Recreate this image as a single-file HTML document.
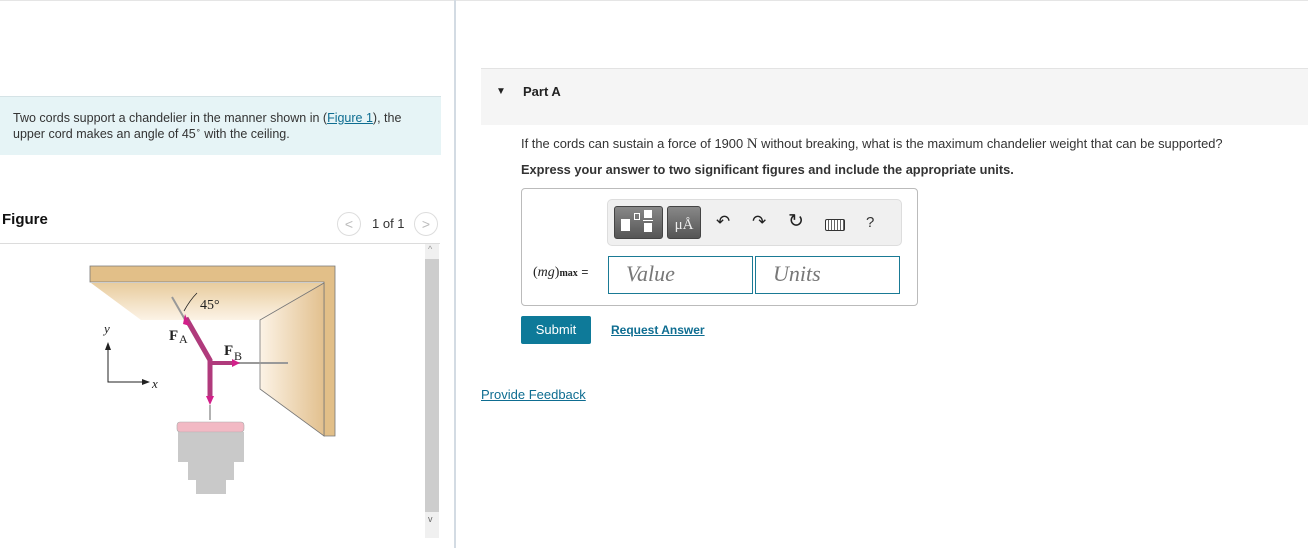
<!DOCTYPE html>
<html><head><meta charset="utf-8"><style>
*{margin:0;padding:0;box-sizing:border-box}
body{width:1308px;height:548px;background:#fff;font-family:"Liberation Sans",Arial,sans-serif;color:#333;position:relative;overflow:hidden;font-size:13px}
.a{position:absolute}
a{color:#0e6d91}
sup{line-height:0}
</style></head><body>
<div class="a" style="left:0;top:0;width:1308px;height:1px;background:#e5e5e5"></div>
<div class="a" style="left:454px;top:0;width:2px;height:548px;background:#d3dbe3"></div>
<div class="a" style="left:0;top:96px;width:441px;height:59px;background:#e6f4f6;border-top:1px solid #d5e3e6"></div>
<div class="a" style="left:13px;top:110px;width:420px;font-size:12.5px;line-height:16px;color:#333">Two cords support a chandelier in the manner shown in (<a href="#" style="text-decoration:underline">Figure 1</a>), the upper cord makes an angle of 45<sup style="font-size:8px">∘</sup> with the ceiling.</div>
<div class="a" style="left:2px;top:211px;font-size:15px;font-weight:bold;color:#111">Figure</div>
<div class="a" style="left:337px;top:212px;width:24px;height:24px;border:1px solid #ddd;border-radius:50%;color:#bbb;text-align:center;line-height:22px;font-size:14px">&lt;</div>
<div class="a" style="left:372px;top:216px;font-size:13px;color:#333">1 of 1</div>
<div class="a" style="left:414px;top:212px;width:24px;height:24px;border:1px solid #ddd;border-radius:50%;color:#bbb;text-align:center;line-height:22px;font-size:14px">&gt;</div>
<div class="a" style="left:0;top:243px;width:440px;height:1px;background:#dcdcdc"></div>
<div class="a" style="left:425px;top:244px;width:14px;height:294px;background:#f0f0f0"></div>
<div class="a" style="left:425px;top:259px;width:14px;height:253px;background:#cdcdcd"></div>
<div class="a" style="left:428px;top:244px;font-size:9px;color:#999">^</div>
<div class="a" style="left:428px;top:514px;font-size:9px;color:#666">v</div>
<svg class="a" style="left:80px;top:260px" width="300" height="250" viewBox="80 260 300 250">
<defs><linearGradient id="c" x1="0" y1="0" x2="0" y2="1"><stop offset="0" stop-color="#e8cc9e"/><stop offset="1" stop-color="#fcf3e6"/></linearGradient>
<linearGradient id="w" x1="0" y1="0" x2="1" y2="0"><stop offset="0" stop-color="#fcf3e6"/><stop offset="1" stop-color="#e2c08e"/></linearGradient></defs>
<polygon points="90,266 335,266 335,436 324,436 324,282 90,282" fill="#e2bf88" stroke="#777" stroke-width="0.8"/>
<polygon points="91,283 324,283 260,320 141,320" fill="url(#c)"/>
<polygon points="260,320 324,283 324,436 260,389" fill="url(#w)" stroke="#777" stroke-width="0.8"/>
<line x1="172" y1="297" x2="210" y2="363" stroke="#999" stroke-width="2"/>
<line x1="210" y1="363" x2="288" y2="363" stroke="#999" stroke-width="2"/>
<path d="M186,318 L210,360 L210,398" stroke="#b03a7c" stroke-width="5" fill="none"/>
<line x1="210" y1="363" x2="234" y2="363" stroke="#b03a7c" stroke-width="4"/>
<polygon points="185,314 190,326 183,324" fill="#d21f8a"/><polygon points="240,363 232,359 232,367" fill="#d21f8a"/><polygon points="210,405 206,396 214,396" fill="#d21f8a"/>
<line x1="210" y1="405" x2="210" y2="420" stroke="#999" stroke-width="1.5"/>
<path d="M184,311 Q190,300 197,293" stroke="#222" fill="none" stroke-width="0.8"/>
<text x="200" y="309" font-family="Liberation Serif" font-size="14" fill="#222">45°</text>
<text x="169" y="340" font-family="Liberation Serif" font-size="15" font-weight="bold" fill="#222">F</text><text x="179" y="343" font-family="Liberation Serif" font-size="12" fill="#222">A</text>
<text x="224" y="355" font-family="Liberation Serif" font-size="15" font-weight="bold" fill="#222">F</text><text x="234" y="360" font-family="Liberation Serif" font-size="12" fill="#222">B</text>
<text x="104" y="333" font-family="Liberation Serif" font-style="italic" font-size="13" fill="#222">y</text>
<text x="152" y="388" font-family="Liberation Serif" font-style="italic" font-size="13" fill="#222">x</text>
<path d="M108,347 L108,382 L146,382" stroke="#222" fill="none"/><polygon points="108,342 105,350 111,350" fill="#222"/><polygon points="150,382 142,379 142,385" fill="#222"/>
<rect x="177" y="422" width="67" height="10" rx="3" fill="#f2b9c4" stroke="#aaa" stroke-width="0.6"/>
<rect x="178" y="432" width="66" height="30" fill="#bbb" opacity="0.8"/>
<rect x="188" y="462" width="46" height="18" fill="#bbb" opacity="0.8"/>
<rect x="196" y="480" width="30" height="14" fill="#bbb" opacity="0.8"/>
</svg>
<div class="a" style="left:481px;top:68px;width:827px;height:57px;background:#f5f5f5;border-top:1px solid #e3e3e3"></div>
<div class="a" style="left:496px;top:86px;font-size:10px;color:#222">▼</div>
<div class="a" style="left:523px;top:84px;font-size:13px;font-weight:bold;color:#222">Part A</div>
<div class="a" style="left:521px;top:136px;font-size:12.9px;color:#333;white-space:nowrap">If the cords can sustain a force of 1900 <span style="font-family:'Liberation Serif';font-size:15px">N</span> without breaking, what is the maximum chandelier weight that can be supported?</div>
<div class="a" style="left:521px;top:162px;font-size:12.8px;font-weight:bold;color:#333;white-space:nowrap">Express your answer to two significant figures and include the appropriate units.</div>
<div class="a" style="left:521px;top:188px;width:397px;height:118px;border:1px solid #bbb;border-radius:4px"></div>
<div class="a" style="left:607px;top:199px;width:295px;height:47px;background:#f0f0f0;border:1px solid #ddd;border-radius:5px"></div>
<div class="a" style="left:614px;top:206px;width:49px;height:33px;background:linear-gradient(#888,#555);border-radius:3px;border:1px solid #444">
<div class="a" style="left:6px;top:12px;width:9px;height:12px;background:#fff"></div><div class="a" style="left:19px;top:6px;width:6px;height:7px;border:1px solid #fff"></div><div class="a" style="left:29px;top:3px;width:8px;height:8px;background:#fff"></div><div class="a" style="left:28px;top:13px;width:10px;height:1px;background:#fff"></div><div class="a" style="left:29px;top:16px;width:8px;height:9px;background:#fff"></div></div>
<div class="a" style="left:667px;top:206px;width:34px;height:33px;background:linear-gradient(#888,#555);border-radius:3px;border:1px solid #444;color:#eee;font-family:'Liberation Serif';font-size:15px;text-align:center;line-height:36px">μÅ</div>
<div class="a" style="left:716px;top:212px;font-size:17px;color:#222">↶</div>
<div class="a" style="left:752px;top:212px;font-size:17px;color:#222">↷</div>
<div class="a" style="left:788px;top:210px;font-size:19px;color:#222">↻</div>
<div class="a" style="left:825px;top:219px;width:20px;height:12px;border:1.5px solid #333;border-radius:2px;background:repeating-linear-gradient(90deg,#fff 0 2px,#666 2px 3px)"></div>
<div class="a" style="left:866px;top:214px;font-size:15px;color:#333">?</div>
<div class="a" style="left:533px;top:265px;font-family:'Liberation Serif';font-size:14px;color:#222">(<i>mg</i>)<b style="font-size:10px">max</b> <span style="font-family:'Liberation Sans';font-size:12px">=</span></div>
<div class="a" style="left:608px;top:256px;width:145px;height:38px;border:1px solid #1a7a95"></div>
<div class="a" style="left:626px;top:261px;font-family:'Liberation Serif';font-style:italic;font-size:22px;color:#777">Value</div>
<div class="a" style="left:755px;top:256px;width:145px;height:38px;border:1px solid #1a7a95"></div>
<div class="a" style="left:773px;top:261px;font-family:'Liberation Serif';font-style:italic;font-size:22px;color:#777">Units</div>
<div class="a" style="left:521px;top:316px;width:70px;height:28px;background:#0e7a99;border-radius:2px;color:#fff;font-size:13px;text-align:center;line-height:28px">Submit</div>
<div class="a" style="left:611px;top:323px;font-size:12px;font-weight:bold"><a href="#">Request Answer</a></div>
<div class="a" style="left:481px;top:387px;font-size:13px"><a href="#">Provide Feedback</a></div>
</body></html>
